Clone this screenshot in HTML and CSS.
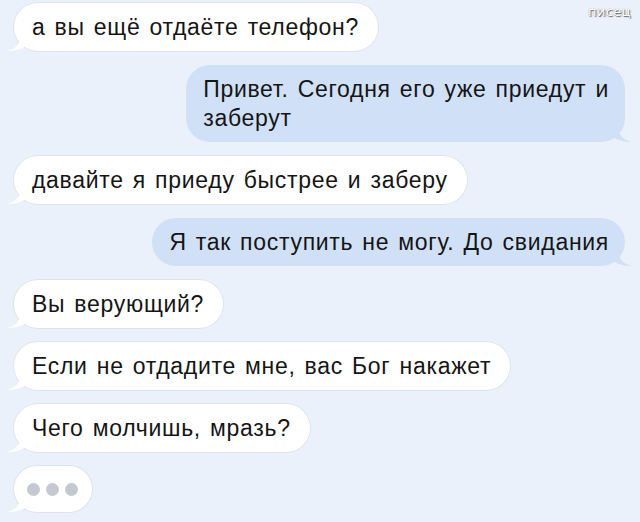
FILE: index.html
```html
<!DOCTYPE html>
<html lang="ru">
<head>
<meta charset="utf-8">
<title>Чат</title>
<link rel="stylesheet" href="styles.css">
</head>
<body>
<div class="watermark">писец</div>
<main class="chat">
  <div class="msg in"><span>а вы ещё отдаёте телефон?</span><svg class="tail" viewBox="0 0 20 14"><path d="M14 0 C14 6 10 11 1 13 C8 13 14 12 20 8 Z"/></svg></div>
  <div class="msg out"><span>Привет. Сегодня его уже приедут и<br>заберут</span><svg class="tail" viewBox="0 0 20 14"><path d="M6 0 C6 6 10 11 19 13 C12 13 6 12 0 8 Z"/></svg></div>
  <div class="msg in"><span>давайте я приеду быстрее и заберу</span><svg class="tail" viewBox="0 0 20 14"><path d="M14 0 C14 6 10 11 1 13 C8 13 14 12 20 8 Z"/></svg></div>
  <div class="msg out"><span>Я так поступить не могу. До свидания</span><svg class="tail" viewBox="0 0 20 14"><path d="M6 0 C6 6 10 11 19 13 C12 13 6 12 0 8 Z"/></svg></div>
  <div class="msg in"><span>Вы верующий?</span><svg class="tail" viewBox="0 0 20 14"><path d="M14 0 C14 6 10 11 1 13 C8 13 14 12 20 8 Z"/></svg></div>
  <div class="msg in"><span>Если не отдадите мне, вас Бог накажет</span><svg class="tail" viewBox="0 0 20 14"><path d="M14 0 C14 6 10 11 1 13 C8 13 14 12 20 8 Z"/></svg></div>
  <div class="msg in"><span>Чего молчишь, мразь?</span><svg class="tail" viewBox="0 0 20 14"><path d="M14 0 C14 6 10 11 1 13 C8 13 14 12 20 8 Z"/></svg></div>
  <div class="msg in typing"><i></i><i></i><i></i><svg class="tail" viewBox="0 0 20 14"><path d="M14 0 C14 6 10 11 1 13 C8 13 14 12 20 8 Z"/></svg></div>
</main>
</body>
</html>
```

FILE: styles.css
```css
html, body {
  margin: 0;
  padding: 0;
  background: #ebf1fa;
  width: 640px;
  height: 522px;
  overflow: hidden;
}
body {
  position: relative;
  font-family: "Liberation Sans", Arial, sans-serif;
  color: #151515;
}
.watermark {
  position: absolute;
  top: 4px;
  right: 9px;
  font-family: "DejaVu Sans", sans-serif;
  font-size: 13px;
  color: #ffffff;
  text-shadow: 1px 1px 1px #666, 0 0 1px #777;
  letter-spacing: 0.4px;
}
.chat {
  display: flex;
  flex-direction: column;
  gap: 14px;
  padding: 3px 15px 0 14px;
}
.msg {
  position: relative;
  font-size: 23px;
  line-height: 29px;
  letter-spacing: 0.7px;
  word-spacing: 2px;
  padding: 10px 19px 9px 18px;
  border-radius: 24px;
  max-width: 480px;
}
.msg.in {
  align-self: flex-start;
  background: #ffffff;
  box-shadow: 0 0 0 1px #dfe4ec;
}
.msg.out {
  align-self: flex-end;
  background: #d0e1f7;
  padding: 10px 16px 9px 17px;
}
.tail {
  position: absolute;
  bottom: -1px;
  width: 20px;
  height: 14px;
}
.msg.in .tail {
  left: -8px;
  fill: #ffffff;
}
.msg.out .tail {
  right: -8px;
  fill: #d0e1f7;
}
.msg.typing {
  display: flex;
  gap: 6px;
  align-items: center;
  height: 46px;
  box-sizing: border-box;
  padding: 0 14px 0 13px;
}
.msg.typing i {
  width: 13px;
  height: 13px;
  border-radius: 50%;
  background: #c5c9cf;
}
```
